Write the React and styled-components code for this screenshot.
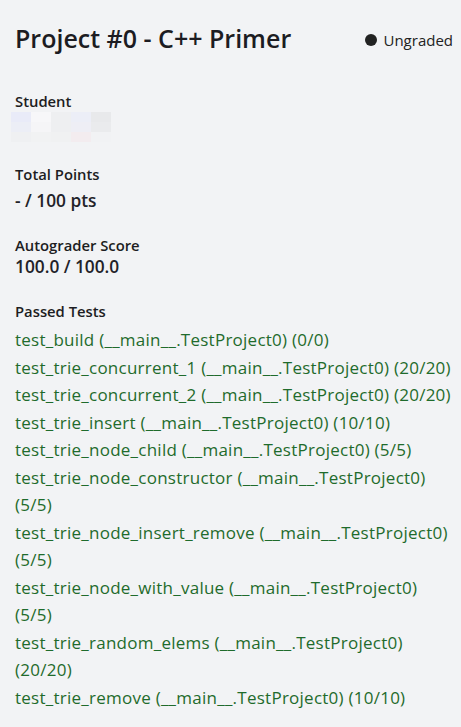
import React from "react";
import styled, { createGlobalStyle } from "styled-components";

const Global = createGlobalStyle`
  html, body { margin: 0; padding: 0; background: #f2f3f5; }
  body { font-family: "Open Sans", "Noto Sans", sans-serif; color: #1d1d22; }
`;

const Page = styled.div`
  padding: 19px 7px 20px 15px;
  box-sizing: border-box;
  width: 461px;
`;

const Header = styled.header`
  display: flex;
  align-items: center;
  justify-content: space-between;
  margin-right: 1px;
`;

const Title = styled.h1`
  margin: 0;
  font-size: 25px;
  font-weight: 600;
  line-height: 38px;
  color: #1c1c22;
`;

const Status = styled.span`
  display: flex;
  align-items: center;
  gap: 6px;
  font-size: 15px;
  color: #222;
  margin-top: 4px;
`;

const Dot = styled.span`
  width: 12px;
  height: 12px;
  border-radius: 50%;
  background: #222;
`;

const Section = styled.section`
  margin-top: ${(p) => p.$gap || 25}px;
`;

const Label = styled.div`
  font-size: 14.8px;
  font-weight: 600;
  line-height: 20px;
  color: #1d1d22;
`;

const Value = styled.div`
  font-size: 17.3px;
  font-weight: 600;
  line-height: 24px;
  color: #222228;
  margin-top: ${(p) => p.$mt || 0}px;
`;

const Redacted = styled.div`
  display: grid;
  grid-template-columns: repeat(5, 20px);
  grid-auto-rows: 10px;
  width: 100px;
  margin: 1px 0 0 -4px;
`;

const Pix = styled.span`
  background: ${(p) => p.$c};
`;

const TestList = styled.ul`
  list-style: none;
  margin: 5px 0 0;
  padding: 0;
`;

const TestItem = styled.li`
  font-size: 17px;
  line-height: 27.5px;
  letter-spacing: 0.25px;
  color: #1f6b2c;
`;

const pixels = [
  "#e9ebf8", "#f7f7f9", "#eeeff1", "#eceef7", "#e8e9eb",
  "#eceef6", "#f5f5f7", "#eeeff1", "#eeeef5", "#eaebed",
  "#eff0f2", "#f1f2f3", "#f0f1f2", "#f3ecef", "#f1f2f4",
];

const tests = [
  "test_build (__main__.TestProject0) (0/0)",
  "test_trie_concurrent_1 (__main__.TestProject0) (20/20)",
  "test_trie_concurrent_2 (__main__.TestProject0) (20/20)",
  "test_trie_insert (__main__.TestProject0) (10/10)",
  "test_trie_node_child (__main__.TestProject0) (5/5)",
  "test_trie_node_constructor (__main__.TestProject0) (5/5)",
  "test_trie_node_insert_remove (__main__.TestProject0) (5/5)",
  "test_trie_node_with_value (__main__.TestProject0) (5/5)",
  "test_trie_random_elems (__main__.TestProject0) (20/20)",
  "test_trie_remove (__main__.TestProject0) (10/10)",
];

export default function App() {
  return (
    <Page>
      <Global />
      <Header>
        <Title>Project #0 - C++ Primer</Title>
        <Status>
          <Dot />
          Ungraded
        </Status>
      </Header>
      <Section $gap={34}>
        <Label>Student</Label>
        <Redacted>
          {pixels.map((c, i) => (
            <Pix key={i} $c={c} />
          ))}
        </Redacted>
      </Section>
      <Section $gap={22}>
        <Label>Total Points</Label>
        <Value $mt={5}>- / 100 pts</Value>
      </Section>
      <Section $gap={22}>
        <Label>Autograder Score</Label>
        <Value>100.0 / 100.0</Value>
      </Section>
      <Section $gap={22}>
        <Label>Passed Tests</Label>
        <TestList>
          {tests.map((t) => (
            <TestItem key={t}>{t}</TestItem>
          ))}
        </TestList>
      </Section>
    </Page>
  );
}
